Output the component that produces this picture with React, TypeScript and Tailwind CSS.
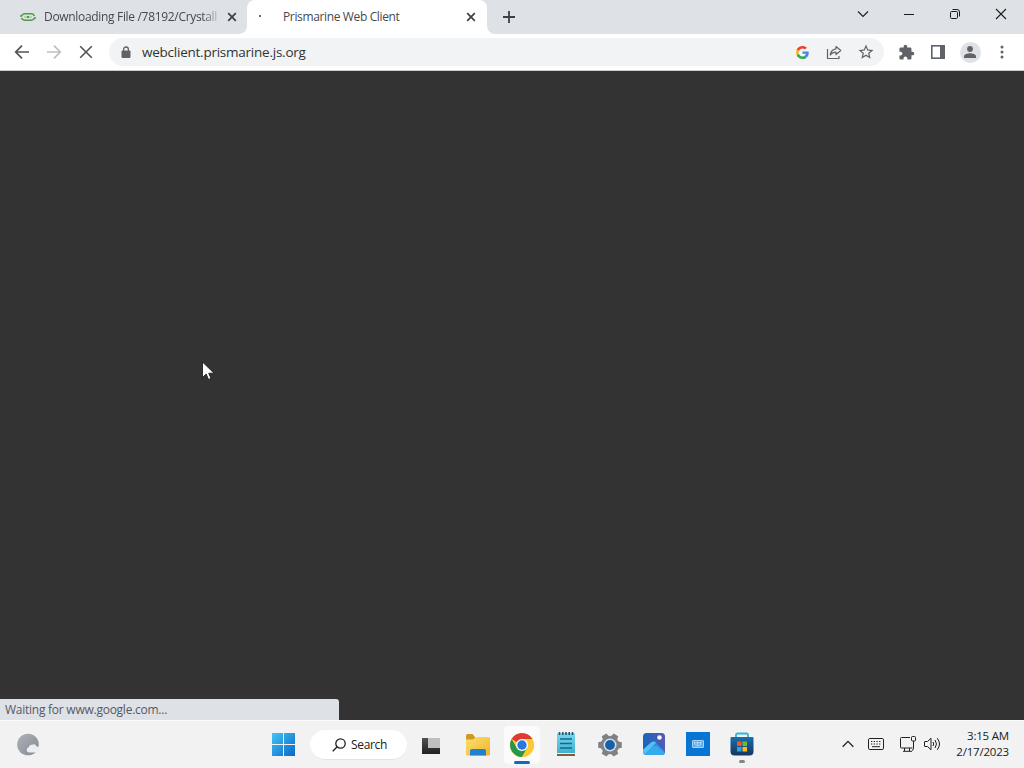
import type { ReactNode } from 'react'

type SlotProps = {
  children: ReactNode
  className?: string
}

const ToolbarSlot = ({ children, className = '' }: SlotProps) => (
  <div
    className={`w-8 h-8 shrink-0 flex items-center justify-center ${className}`}
  >
    {children}
  </div>
)

const WindowButton = ({ children }: SlotProps) => (
  <div className="w-[46px] h-[29px] flex items-center justify-center text-[#1c1c1c]">
    {children}
  </div>
)

const TaskbarSlot = ({ children, className = '' }: SlotProps) => (
  <div
    className={`relative w-11 h-12 shrink-0 flex items-center justify-center ${className}`}
  >
    {children}
  </div>
)

const CloseIcon = () => (
  <svg width="10" height="10" viewBox="0 0 10 10">
    <path
      d="M1.2 1.2l7.6 7.6M8.8 1.2L1.2 8.8"
      stroke="#3c4043"
      strokeWidth="1.7"
    />
  </svg>
)

const FileSiteIcon = () => (
  <svg width="16" height="10" viewBox="0 0 16 10" fill="none">
    <path
      d="M0 4h1.500Q2.500 1.700 4.500 1.700h7q2 0 3 2.300M16 6h-1.500q-1 2.300-3 2.300h-7q-2 0-3-2.300"
      stroke="#4f9a45"
      strokeWidth="1.6"
    />
    <path d="M4 5h8" stroke="#93c08d" strokeWidth="1" />
    <circle cx="8" cy="5" r="1.100" fill="#3f8a38" />
  </svg>
)

const TabStrip = () => (
  <div className="h-[34px] bg-[#dee1e6] flex">
    <div className="w-[247px] flex items-center pl-5">
      <FileSiteIcon />
      <div className="ml-2 w-[175px] whitespace-nowrap text-[12px] leading-4 tracking-[-0.32px] text-[#45494d] [mask-image:linear-gradient(to_right,black_158px,transparent_178px)]">
        Downloading File /78192/Crystall
      </div>
      <div className="ml-2">
        <CloseIcon />
      </div>
    </div>
    <div className="relative w-60 h-full bg-white rounded-t-lg flex items-center">
      <svg
        className="absolute bottom-0 -left-2"
        width="8"
        height="8"
        viewBox="0 0 8 8"
      >
        <path d="M8 0v8H0a8 8 0 0 0 8-8z" fill="#fff" />
      </svg>
      <svg
        className="absolute bottom-0 -right-2"
        width="8"
        height="8"
        viewBox="0 0 8 8"
      >
        <path d="M0 0v8h8a8 8 0 0 1-8-8z" fill="#fff" />
      </svg>
      <div className="ml-3 mb-0.5 w-0.5 h-0.5 bg-[#5f6f86]" />
      <div className="ml-[22px] w-[183px] whitespace-nowrap text-[12px] leading-4 tracking-[-0.36px] text-[#45494d]">
        Prismarine Web Client
      </div>
      <CloseIcon />
    </div>
    <div className="w-11 flex items-center justify-center">
      <svg width="12" height="12" viewBox="0 0 12 12">
        <path d="M6 0v12M0 6h12" stroke="#3c4043" strokeWidth="1.8" />
      </svg>
    </div>
    <div className="ml-auto flex">
      <WindowButton>
        <svg
          className="-mt-0.5"
          width="12"
          height="8"
          viewBox="0 0 12 8"
          fill="none"
        >
          <path d="M1 1.5l5 5 5-5" stroke="currentColor" strokeWidth="1.1" />
        </svg>
      </WindowButton>
      <WindowButton>
        <div className="w-2.5 h-px bg-[#1c1c1c]" />
      </WindowButton>
      <WindowButton>
        <svg
          className="-mt-px"
          width="10"
          height="10"
          viewBox="0 0 10 10"
          fill="none"
          stroke="currentColor"
        >
          <rect x=".5" y="2.5" width="7" height="7" rx="1.2" />
          <path d="M2.5 .5H7A2.5 2.5 0 0 1 9.5 3v4.5" />
        </svg>
      </WindowButton>
      <WindowButton>
        <svg
          className="-mt-px"
          width="12"
          height="12"
          viewBox="0 0 12 12"
        >
          <path
            d="M1 1l10 10M11 1L1 11"
            stroke="currentColor"
            strokeWidth="1.1"
          />
        </svg>
      </WindowButton>
    </div>
  </div>
)

const Omnibox = () => (
  <div className="w-[775px] h-7 rounded-full bg-[#f1f3f4] flex items-center pl-3">
    <svg width="10" height="13" viewBox="0 0 10 13">
      <path
        d="M2.6 5V3.4a2.4 2.4 0 0 1 4.8 0V5"
        fill="none"
        stroke="#5f6368"
        strokeWidth="1.3"
      />
      <rect x=".5" y="4.6" width="9" height="7.4" rx="1" fill="#5f6368" />
    </svg>
    <div className="ml-[11px] whitespace-nowrap text-[13.5px] leading-5 tracking-[-0.24px] text-[#303336]">
      webclient.prismarine.js.org
    </div>
    <div className="ml-auto mr-0.5 flex">
      <ToolbarSlot>
        <svg width="13" height="13" viewBox="0 0 48 48">
          <path
            fill="#EA4335"
            d="M24 9.5c3.54 0 6.71 1.22 9.21 3.6l6.85-6.85C35.9 2.38 30.47 0 24 0 14.62 0 6.51 5.38 2.56 13.22l7.98 6.19C12.43 13.72 17.74 9.5 24 9.5z"
          />
          <path
            fill="#4285F4"
            d="M46.98 24.55c0-1.57-.15-3.09-.38-4.55H24v9.02h12.94c-.58 2.96-2.26 5.48-4.78 7.18l7.73 6c4.51-4.18 7.09-10.36 7.09-17.65z"
          />
          <path
            fill="#FBBC05"
            d="M10.53 28.59c-.48-1.45-.76-2.99-.76-4.59s.27-3.14.76-4.59l-7.98-6.19C.92 16.46 0 20.12 0 24c0 3.88.92 7.54 2.56 10.78l7.97-6.19z"
          />
          <path
            fill="#34A853"
            d="M24 48c6.48 0 11.93-2.13 15.89-5.81l-7.73-6c-2.15 1.45-4.92 2.3-8.16 2.3-6.26 0-11.57-4.22-13.47-9.91l-7.98 6.19C6.51 42.62 14.62 48 24 48z"
          />
        </svg>
      </ToolbarSlot>
      <ToolbarSlot className="text-[#5f6368]">
        <svg
          width="16"
          height="16"
          viewBox="0 0 16 16"
          fill="none"
          stroke="currentColor"
          strokeWidth="1.2"
          strokeLinejoin="round"
        >
          <path d="M1.5 5v9.500h11.500V12" />
          <path d="M10 2.5l4.800 4-4.800 4V8.200C7.500 8.200 5.700 9 4.200 11c.5-3.300 2.500-5.700 5.800-6.200z" />
        </svg>
      </ToolbarSlot>
      <ToolbarSlot className="text-[#5f6368]">
        <svg
          className="-mt-px"
          width="18"
          height="18"
          viewBox="0 0 24 24"
          fill="currentColor"
        >
          <path d="M22 9.24l-7.19-.62L12 2 9.19 8.63 2 9.24l5.46 4.73L5.82 21 12 17.27 18.18 21l-1.63-7.03L22 9.24zM12 15.4l-3.76 2.27 1-4.28-3.32-2.88 4.38-.38L12 6.1l1.71 4.04 4.38.38-3.32 2.88 1 4.28L12 15.4z" />
        </svg>
      </ToolbarSlot>
    </div>
  </div>
)

const Toolbar = () => (
  <div className="h-[37px] bg-white border-b border-[#c9cbce] flex items-center px-1.5">
    <ToolbarSlot className="text-[#505357]">
      <svg width="16" height="16" viewBox="0 0 16 16" fill="none">
        <path
          d="M15 8H2M8 1.7L1.7 8 8 14.3"
          stroke="currentColor"
          strokeWidth="1.7"
        />
      </svg>
    </ToolbarSlot>
    <ToolbarSlot className="text-[#bdbfc2]">
      <svg width="16" height="16" viewBox="0 0 16 16" fill="none">
        <path
          d="M1 8h13M8 1.7L14.3 8 8 14.3"
          stroke="currentColor"
          strokeWidth="1.7"
        />
      </svg>
    </ToolbarSlot>
    <ToolbarSlot className="text-[#505357]">
      <svg width="14" height="14" viewBox="0 0 14 14">
        <path
          d="M1.2 1.2l11.600 11.600M12.800 1.200L1.200 12.800"
          stroke="currentColor"
          strokeWidth="1.6"
        />
      </svg>
    </ToolbarSlot>
    <div className="ml-[7px]">
      <Omnibox />
    </div>
    <div className="ml-auto flex text-[#5f6368]">
      <ToolbarSlot>
        <svg width="17" height="17" viewBox="0 0 24 24" fill="currentColor">
          <path d="M20.5 11H19V7c0-1.100-.9-2-2-2h-4V3.500C13 2.120 11.880 1 10.500 1S8 2.120 8 3.500V5H4c-1.100 0-1.990.9-1.990 2v3.800H3.500c1.490 0 2.700 1.210 2.700 2.700s-1.210 2.700-2.700 2.700H2V20c0 1.100.9 2 2 2h3.800v-1.500c0-1.490 1.210-2.700 2.700-2.700 1.490 0 2.700 1.210 2.700 2.700V22H17c1.100 0 2-.9 2-2v-4h1.500c1.380 0 2.500-1.120 2.500-2.500S21.880 11 20.500 11z" />
        </svg>
      </ToolbarSlot>
      <ToolbarSlot>
        <svg width="14" height="14" viewBox="0 0 14 14" fill="none">
          <rect
            x=".8"
            y=".8"
            width="12.4"
            height="12.4"
            stroke="currentColor"
            strokeWidth="1.6"
          />
          <path d="M9 0h5v14H9z" fill="currentColor" />
        </svg>
      </ToolbarSlot>
      <ToolbarSlot>
        <div className="w-[21px] h-[21px] rounded-full bg-[#dee1e6] flex items-center justify-center">
          <svg width="12" height="12" viewBox="0 0 12 12" fill="currentColor">
            <circle cx="6" cy="3" r="2.9" />
            <path d="M0 12v-1.700C0 8.200 3.600 7.300 6 7.300s6 .9 6 3V12z" />
          </svg>
        </div>
      </ToolbarSlot>
      <ToolbarSlot>
        <svg width="4" height="14" viewBox="0 0 4 14" fill="currentColor">
          <circle cx="2" cy="2" r="1.5" />
          <circle cx="2" cy="7" r="1.5" />
          <circle cx="2" cy="12" r="1.5" />
        </svg>
      </ToolbarSlot>
    </div>
  </div>
)

const MouseCursor = () => (
  <svg
    className="absolute left-[202px] top-[290px]"
    width="13"
    height="20"
    viewBox="0 0 13 20"
  >
    <path
      d="M.5 1v15.500l3.700-3.500 2.300 5.400 2.500-1-2.300-5.200h5.300z"
      fill="#fff"
      stroke="#111"
      strokeWidth=".8"
    />
  </svg>
)

const Page = () => (
  <div className="relative flex-1 bg-[#333333] flex items-end">
    <MouseCursor />
    <div className="w-[339px] h-[21px] bg-[#dee1e6] rounded-tr-[3px] pl-[5px] whitespace-nowrap text-[12px] leading-[21px] tracking-[-0.25px] text-[#55595e]">
      Waiting for www.google.com...
    </div>
  </div>
)

const WeatherIcon = () => (
  <svg width="24" height="24" viewBox="0 0 24 24">
    <defs>
      <linearGradient id="moon" x1="0" y1="0" x2="1" y2="1">
        <stop offset="0" stopColor="#aeb2b8" />
        <stop offset="1" stopColor="#858b94" />
      </linearGradient>
    </defs>
    <circle cx="12" cy="11.5" r="10.8" fill="url(#moon)" />
    <path
      d="M13 19.500a2.700 2.700 0 0 1-.3-5.300 3 3 0 0 1 3.300-2.500 3.300 3.300 0 0 1 4.500 1.700 3 3 0 0 1 .5 6.100z"
      fill="#eceef2"
    />
  </svg>
)

const StartIcon = () => (
  <svg width="23" height="23" viewBox="0 0 23 23">
    <defs>
      <linearGradient
        id="start"
        gradientUnits="userSpaceOnUse"
        x1="0"
        y1="0"
        x2="23"
        y2="23"
      >
        <stop offset="0" stopColor="#45c3f5" />
        <stop offset="1" stopColor="#0869c7" />
      </linearGradient>
    </defs>
    <path
      d="M0 0h11v11H0zM12 0h11v11H12zM0 12h11v11H0zM12 12h11v11H12z"
      fill="url(#start)"
    />
  </svg>
)

const TaskViewIcon = () => (
  <svg width="20" height="18" viewBox="0 0 20 18">
    <defs>
      <linearGradient id="desk" x1="0" y1="0" x2="0" y2="1">
        <stop offset="0" stopColor="#505050" />
        <stop offset="1" stopColor="#202020" />
      </linearGradient>
    </defs>
    <path d="M1 2h18v16H1z" fill="url(#desk)" />
    <path d="M7 2h12v10H7z" fill="#bfbfbf" />
  </svg>
)

const ExplorerIcon = () => (
  <svg width="26" height="24" viewBox="0 0 26 24">
    <defs>
      <linearGradient id="folder" x1="0" y1="0" x2="1" y2="1">
        <stop offset="0" stopColor="#ffdf70" />
        <stop offset="1" stopColor="#edb52c" />
      </linearGradient>
    </defs>
    <path d="M1 2.500Q1 1 2.500 1h5l2.500 3v4H1z" fill="#cd9a24" />
    <path
      d="M1 6.500h7l3-2.500h12.500Q25 4 25 5.500v16q0 1-1 1H2q-1 0-1-1z"
      fill="url(#folder)"
    />
    <path d="M5 22.500V18q0-2 2-2h12q2 0 2 2v4.500z" fill="#2180cf" />
  </svg>
)

const ChromeIcon = () => (
  <svg width="24" height="24" viewBox="0 0 24 24">
    <circle cx="12" cy="12" r="12" fill="#fcc934" />
    <path d="M12 12 1.610 6A12 12 0 0 1 22.390 6H12z" fill="#de3c32" />
    <path d="M1.610 6A12 12 0 0 0 12 24l5.200-9L12 12 6.800 15z" fill="#27984a" />
    <path d="M22.390 6A12 12 0 0 1 12 24l5.200-9V6z" fill="#fcc934" />
    <circle cx="12" cy="12" r="6" fill="#fff" />
    <circle cx="12" cy="12" r="4.7" fill="#2878e4" />
  </svg>
)

const NotepadIcon = () => (
  <svg className="-mt-px" width="20" height="26" viewBox="0 0 20 26">
    <defs>
      <linearGradient id="note" x1="0" y1="0" x2="0" y2="1">
        <stop offset="0" stopColor="#79d9ed" />
        <stop offset="1" stopColor="#3caed0" />
      </linearGradient>
    </defs>
    <path d="M1 22h18v3H1z" fill="#8a5a36" />
    <rect x="1" y="2" width="18" height="21" rx="1" fill="url(#note)" />
    <path d="M1 22.500h18" stroke="#dff3f6" />
    <path d="M4 8h12M4 12.500h12M4 17h12" stroke="#15698a" strokeWidth="1.5" />
    <path
      d="M3.500 1v3M6.800 1v3M10 1v3M13.200 1v3M16.500 1v3"
      stroke="#24566a"
      strokeWidth="1.6"
    />
  </svg>
)

const teeth = [0, 60, 120, 180, 240, 300]

const SettingsIcon = () => (
  <svg width="24" height="24" viewBox="-12 -12 24 24">
    <circle r="9.3" fill="#7e8287" />
    {teeth.map(angle => (
      <path
        key={angle}
        d="M-3.700-7l1-4.800h5.400l1 4.800z"
        fill="#7e8287"
        transform={`rotate(${angle + 30})`}
      />
    ))}
    <circle r="6.5" fill="#d9dde1" />
    <circle r="4.9" fill="#155fac" />
  </svg>
)

const PhotosIcon = () => (
  <svg className="-mt-px" width="22" height="22" viewBox="0 0 22 22">
    <defs>
      <linearGradient id="sky" x1="0" y1="0" x2="1" y2="0">
        <stop offset="0" stopColor="#1767b9" />
        <stop offset="1" stopColor="#5559b3" />
      </linearGradient>
      <clipPath id="photo">
        <rect width="22" height="22" rx="3.5" />
      </clipPath>
    </defs>
    <g clipPath="url(#photo)">
      <path d="M0 0h22v22H0z" fill="url(#sky)" />
      <path d="M9 9.500q2-2 4 0l9 9.500v3H3z" fill="#2a92e4" />
      <path d="M0 16.500l8-7q2.500-2 5 0L1.500 22H0z" fill="#50c3f5" />
      <path d="M1.500 22l8.500-8.500q2-1.500 4 0L22 20v2z" fill="#39a9ee" />
      <circle cx="16.500" cy="4.500" r="2.300" fill="#f4f6fa" />
    </g>
  </svg>
)

const KeyboardAppIcon = () => (
  <div className="w-6 h-6 -mt-px bg-[#0875d4] flex items-center justify-center">
    <svg className="-mt-px" width="12" height="8" viewBox="0 0 12 8">
      <rect
        x=".5"
        y=".5"
        width="11"
        height="7"
        rx=".5"
        fill="#57a9e8"
        stroke="#a7d5f7"
      />
      <path
        d="M2 2.500h8M2 4h8M3.500 5.700h5"
        stroke="#e4f3ff"
        strokeWidth=".9"
        strokeDasharray="1 .5"
      />
    </svg>
  </div>
)

const StoreIcon = () => (
  <svg className="-mt-px" width="24" height="24" viewBox="0 0 24 24">
    <defs>
      <linearGradient id="bag" x1="0" y1="0" x2="0" y2="1">
        <stop offset="0" stopColor="#196fab" />
        <stop offset="1" stopColor="#153461" />
      </linearGradient>
    </defs>
    <path
      d="M6 6V3q0-1.500 1.500-1.500h9q1.500 0 1.500 1.500v3"
      fill="none"
      stroke="#35b3db"
      strokeWidth="1.8"
    />
    <path
      d="M.5 6q0-1 1-1h21q1 0 1 1v13.500q0 4-4 4h-15q-4 0-4-4z"
      fill="url(#bag)"
    />
    <path d="M7 9.500h4.500V14H7z" fill="#ee5927" />
    <path d="M12.500 9.500H17V14h-4.500z" fill="#79b82d" />
    <path d="M7 15h4.500v4.500H7z" fill="#24a7e5" />
    <path d="M12.500 15H17v4.500h-4.500z" fill="#fdbb22" />
  </svg>
)

const Tray = () => (
  <div className="ml-auto mr-[15px] h-full flex items-center text-[#202020]">
    <svg
      className="-mt-px"
      width="12"
      height="8"
      viewBox="0 0 12 8"
      fill="none"
    >
      <path
        d="M.7 6.700L6 1.400l5.300 5.300"
        stroke="currentColor"
        strokeWidth="1.3"
      />
    </svg>
    <svg
      className="ml-3.5 -mt-0.5"
      width="16"
      height="12"
      viewBox="0 0 16 12"
      fill="none"
      stroke="currentColor"
    >
      <rect x=".5" y=".5" width="15" height="11" rx="1.3" />
      <path d="M3 3.500h10M3 6h10" strokeDasharray="1.3 1.4" />
      <path d="M4 8.700h8" />
    </svg>
    <svg
      className="ml-4 -mt-px"
      width="16"
      height="16"
      viewBox="0 0 16 16"
      fill="none"
      stroke="currentColor"
    >
      <path d="M10 1.500H1.500q-1 0-1 1V11q0 1 1 1H12.500M4.500 12v3M9.500 12v3M3 15.300h9" />
      <rect x="11.500" y=".5" width="4" height="4.500" rx="1" />
      <path d="M13.500 5v7.500q0 1.500-1.500 2" />
    </svg>
    <svg
      className="ml-2 -mt-0.5"
      width="17"
      height="14"
      viewBox="0 0 17 14"
      fill="none"
      stroke="currentColor"
      strokeLinejoin="round"
    >
      <path d="M.5 5q0-.5.500-.5h2.500L7 1.200v11.600L3.500 9.500H1q-.5 0-.5-.5z" />
      <path d="M9 5q1.500 2 0 4M11 3q3 4 0 8M13.200 1.200q4.600 5.800 0 11.600" />
    </svg>
    <div className="w-[68px] -mt-0.5 text-right whitespace-nowrap text-[11.5px] leading-4 tracking-[-0.2px]">
      <div>3:15 AM</div>
      <div>2/17/2023</div>
    </div>
  </div>
)

const Taskbar = () => (
  <div className="h-12 bg-[#f2f2f2] border-t border-[#fafafa] flex items-center">
    <div className="ml-4">
      <WeatherIcon />
    </div>
    <div className="ml-[232px]">
      <StartIcon />
    </div>
    <div className="ml-[15px] w-[97px] h-[30px] rounded-full bg-white border-b border-[#e4e4e4] flex items-center">
      <svg
        className="ml-[22px] mt-px"
        width="14"
        height="14"
        viewBox="0 0 14 14"
        fill="none"
        stroke="#202020"
        strokeWidth="1.3"
      >
        <circle cx="8.500" cy="5.500" r="4.7" />
        <path d="M5.200 8.800L.7 13.300" />
      </svg>
      <span className="ml-[5px] mt-0.5 whitespace-nowrap text-[12px] leading-4 tracking-[-0.34px] text-[#202020]">
        Search
      </span>
    </div>
    <TaskbarSlot className="ml-[2px]">
      <TaskViewIcon />
    </TaskbarSlot>
    <TaskbarSlot className="ml-[3px]">
      <ExplorerIcon />
    </TaskbarSlot>
    <TaskbarSlot>
      <div className="w-9 h-[38px] rounded bg-[#fbfbfb] flex items-center justify-center">
        <ChromeIcon />
      </div>
      <div className="absolute bottom-[5px] w-4 h-[3px] rounded-full bg-[#0f6cbd]" />
    </TaskbarSlot>
    <TaskbarSlot>
      <NotepadIcon />
    </TaskbarSlot>
    <TaskbarSlot>
      <SettingsIcon />
    </TaskbarSlot>
    <TaskbarSlot>
      <PhotosIcon />
    </TaskbarSlot>
    <TaskbarSlot>
      <KeyboardAppIcon />
    </TaskbarSlot>
    <TaskbarSlot>
      <StoreIcon />
      <div className="absolute bottom-[6px] w-1.5 h-[3px] rounded-full bg-[#868686]" />
    </TaskbarSlot>
    <Tray />
  </div>
)

export default function App() {
  return (
    <div className="w-[1024px] h-[768px] overflow-hidden flex flex-col font-['Open_Sans','Noto_Sans',sans-serif]">
      <TabStrip />
      <Toolbar />
      <Page />
      <Taskbar />
    </div>
  )
}
